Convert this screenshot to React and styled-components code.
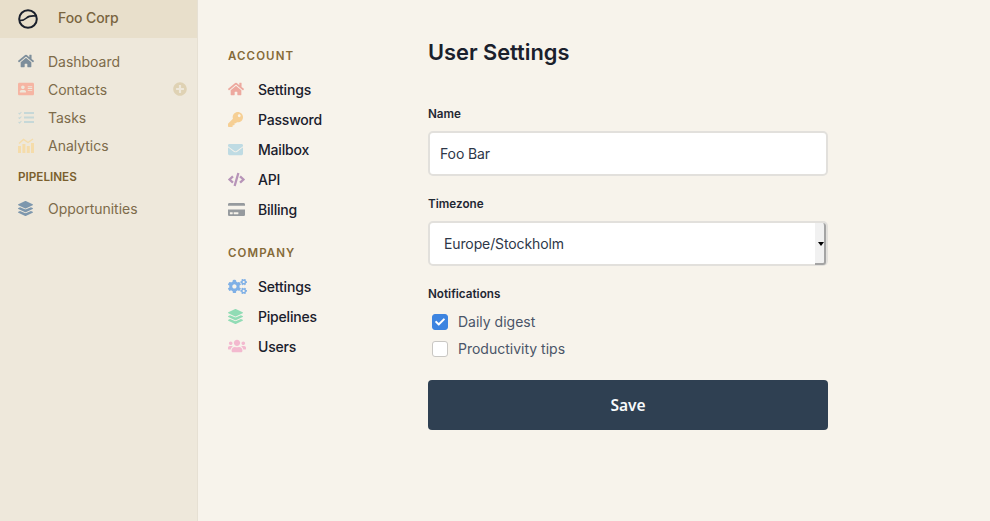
import styled, { createGlobalStyle } from 'styled-components';
import {
  FaHome, FaAddressCard, FaPlusCircle, FaLayerGroup, FaKey, FaEnvelope,
  FaCode, FaCreditCard, FaCogs, FaUsers, FaCheck,
} from 'react-icons/fa';

const GlobalStyle = createGlobalStyle`
  html, body { margin: 0; padding: 0; height: 100%; }
  body {
    background: #f7f3eb;
    font-family: Inter, "Liberation Sans", sans-serif;
    overflow: hidden;
  }
`;

const Page = styled.div`
  display: flex;
  height: 521px;
`;

// Left app sidebar
const Sidebar = styled.aside`
  width: 197px;
  flex-shrink: 0;
  background: #eee8db;
  border-right: 1px solid #e6e0d3;
`;

const Brand = styled.div`
  height: 38px;
  display: flex;
  align-items: center;
  padding-left: 18px;
  background: #e8dfcb;
  color: #7a6540;
  font-size: 14px;
  font-weight: 500;
  letter-spacing: -0.1px;
`;

const BrandName = styled.span`
  margin-left: 20px;
  position: relative;
  top: -2px;
`;

const SideList = styled.div`
  padding: 9px 10px 0 18px;
`;

const SideItem = styled.div`
  height: 28px;
  display: flex;
  align-items: center;
  color: #7d6b4a;
  font-size: 14px;
  letter-spacing: -0.02px;
`;

const SideIcon = styled.span`
  width: 30px;
  flex-shrink: 0;
  display: flex;
  align-items: center;
  color: ${props => props.color};
  font-size: ${props => props.size || 16}px;
`;

const AddIcon = styled.span`
  margin-left: auto;
  display: flex;
  color: #dfd2b4;
  font-size: 14px;
`;

const SideHeading = styled.div`
  margin-top: 6px;
  margin-bottom: 5px;
  height: 24px;
  display: flex;
  align-items: center;
  color: #7a5f2e;
  font-size: 11.7px;
  font-weight: 600;
`;

// Settings sub navigation
const SubNav = styled.nav`
  width: 230px;
  flex-shrink: 0;
  box-sizing: border-box;
  padding: 49px 0 0 30px;
`;

const NavGroup = styled.div`
  margin-bottom: 21px;
`;

const NavHeading = styled.div`
  height: 14px;
  line-height: 14px;
  margin-bottom: 12px;
  color: #856a38;
  font-size: 11.5px;
  font-weight: 600;
  letter-spacing: 1.1px;
`;

const NavItem = styled.div`
  height: 30px;
  display: flex;
  align-items: center;
  color: #1a202c;
  font-size: 14px;
  font-weight: 450;
  letter-spacing: -0.2px;
  position: relative;
  top: -1px;
`;

const NavIcon = styled.span`
  width: 30px;
  flex-shrink: 0;
  display: flex;
  align-items: center;
  color: ${props => props.color};
  font-size: ${props => props.size || 16}px;
`;

// Main form
const Main = styled.main`
  width: 400px;
  padding-top: 38px;
`;

const Title = styled.h1`
  margin: 0 0 41px;
  height: 28px;
  line-height: 28px;
  color: #1a202c;
  font-size: 21.8px;
  font-weight: 600;
`;

const Field = styled.div`
  margin-bottom: 21px;
`;

const Label = styled.label`
  display: block;
  height: 14px;
  line-height: 14px;
  margin-bottom: 10px;
  color: #1f2733;
  font-size: 11.7px;
  font-weight: 600;
`;

const TextInput = styled.input`
  display: block;
  width: 100%;
  height: 45px;
  box-sizing: border-box;
  padding: 0 10px;
  border: 2px solid #e2e0dc;
  border-radius: 5px;
  background: #fff;
  color: #2d3748;
  font-family: inherit;
  font-size: 14px;
  letter-spacing: -0.1px;
  outline: none;
`;

const SelectWrap = styled.div`
  position: relative;

  /* old style native drop-down button on the right edge */
  &::after {
    content: '';
    position: absolute;
    top: 2px;
    right: 2px;
    bottom: 1px;
    width: 9px;
    background: #f1f1f1;
    border-right: 2px solid #a4a4a4;
    border-bottom: 2px solid #a4a4a4;
    border-radius: 0 3px 3px 0;
  }

  &::before {
    content: '';
    position: absolute;
    z-index: 1;
    top: 21px;
    right: 4px;
    border-style: solid;
    border-width: 4px 3.5px 0;
    border-color: #000 transparent transparent;
  }
`;

const Select = styled.select`
  display: block;
  width: 100%;
  height: 45px;
  box-sizing: border-box;
  padding: 0 14px;
  border: 2px solid #e2e0dc;
  border-radius: 5px;
  background: #fff;
  color: #2d3748;
  font-family: inherit;
  font-size: 14px;
  letter-spacing: -0.12px;
  outline: none;
  appearance: none;
`;

const CheckGroup = styled.div`
  margin-top: -3px;
`;

const CheckRow = styled.div`
  height: 27px;
  display: flex;
  align-items: center;
  padding-left: 4px;
  color: #4a5568;
  font-size: 14px;
`;

const CheckBox = styled.span`
  width: 16px;
  height: 16px;
  box-sizing: border-box;
  margin-right: 10px;
  display: flex;
  align-items: center;
  justify-content: center;
  border: 1px solid ${props => (props.checked ? '#3d84e0' : '#c9c7c3')};
  border-radius: 3px;
  background: ${props => (props.checked ? '#3d84e0' : '#fff')};
  color: #fff;
  font-size: 10px;
`;

const SaveButton = styled.button`
  display: block;
  width: 100%;
  height: 50px;
  margin-top: 18px;
  border: none;
  border-radius: 4px;
  background: #2f4052;
  color: #f7fafc;
  font-family: "Noto Sans", "Open Sans", sans-serif;
  font-size: 15.5px;
  font-weight: 600;
`;

const Logo = () => (
  <svg width="20" height="20" viewBox="0 0 20 20" fill="none" stroke="#1a202c" strokeWidth="2">
    <circle cx="10" cy="10" r="8.8" />
    <path d="M1.8 11.5 C5.5 11.5 7 10.5 8.5 9 C10.5 7 13 6.5 18 7" strokeWidth="1.7" />
  </svg>
);

const TasksIcon = () => (
  <svg width="16" height="13" viewBox="0 0 16 13" fill="none" stroke="#c6d8d8" strokeWidth="2">
    <path d="M6 2h10M6 6.5h10M6 11h10" />
    <path d="M0.6 2l1 1 1.8-2M0.6 6.5l1 1 1.8-2M0.6 11l1 1 1.8-2" strokeWidth="1.1" />
  </svg>
);

const AnalyticsIcon = () => (
  <svg width="16" height="15" viewBox="0 0 16 15" fill="#f5dcaa">
    <rect x="0" y="8" width="3" height="7" />
    <rect x="4.4" y="6" width="3" height="9" />
    <rect x="8.8" y="8" width="3" height="7" />
    <rect x="13" y="5" width="3" height="10" />
    <path d="M1 5.5 L5.5 1.5 L10 4.5 L15 1" fill="none" stroke="#f5dcaa" strokeWidth="1.4" />
  </svg>
);

const account = [
  { label: 'Settings', icon: <FaHome />, color: '#eda99f' },
  { label: 'Password', icon: <FaKey />, color: '#f6cf94', size: 15 },
  { label: 'Mailbox', icon: <FaEnvelope />, color: '#bfdbe3', size: 15 },
  { label: 'API', icon: <FaCode />, color: '#b794b8', size: 17 },
  { label: 'Billing', icon: <FaCreditCard />, color: '#969a9e', size: 17 },
];

const company = [
  { label: 'Settings', icon: <FaCogs />, color: '#7fb0e6', size: 19 },
  { label: 'Pipelines', icon: <FaLayerGroup />, color: '#91dcb5', size: 15 },
  { label: 'Users', icon: <FaUsers />, color: '#f3b9cf', size: 18 },
];

function App() {
  return (
    <Page>
      <GlobalStyle />
      <Sidebar>
        <Brand>
          <Logo />
          <BrandName>Foo Corp</BrandName>
        </Brand>
        <SideList>
          <SideItem><SideIcon color="#7d8e9b"><FaHome /></SideIcon>Dashboard</SideItem>
          <SideItem>
            <SideIcon color="#f6b5a3"><FaAddressCard /></SideIcon>Contacts
            <AddIcon><FaPlusCircle /></AddIcon>
          </SideItem>
          <SideItem><SideIcon><TasksIcon /></SideIcon>Tasks</SideItem>
          <SideItem><SideIcon><AnalyticsIcon /></SideIcon>Analytics</SideItem>
          <SideHeading>PIPELINES</SideHeading>
          <SideItem><SideIcon color="#7d97ad" size={15}><FaLayerGroup /></SideIcon>Opportunities</SideItem>
        </SideList>
      </Sidebar>

      <SubNav>
        <NavGroup>
          <NavHeading>ACCOUNT</NavHeading>
          {account.map(item => (
            <NavItem key={item.label}>
              <NavIcon color={item.color} size={item.size}>{item.icon}</NavIcon>{item.label}
            </NavItem>
          ))}
        </NavGroup>
        <NavGroup>
          <NavHeading>COMPANY</NavHeading>
          {company.map(item => (
            <NavItem key={item.label}>
              <NavIcon color={item.color} size={item.size}>{item.icon}</NavIcon>{item.label}
            </NavItem>
          ))}
        </NavGroup>
      </SubNav>

      <Main>
        <Title>User Settings</Title>
        <Field>
          <Label>Name</Label>
          <TextInput defaultValue="Foo Bar" />
        </Field>
        <Field>
          <Label>Timezone</Label>
          <SelectWrap>
            <Select defaultValue="Europe/Stockholm">
              <option>Europe/Stockholm</option>
            </Select>
          </SelectWrap>
        </Field>
        <Label>Notifications</Label>
        <CheckGroup>
          <CheckRow><CheckBox checked><FaCheck /></CheckBox>Daily digest</CheckRow>
          <CheckRow><CheckBox />Productivity tips</CheckRow>
        </CheckGroup>
        <SaveButton>Save</SaveButton>
      </Main>
    </Page>
  );
}

export default App;
